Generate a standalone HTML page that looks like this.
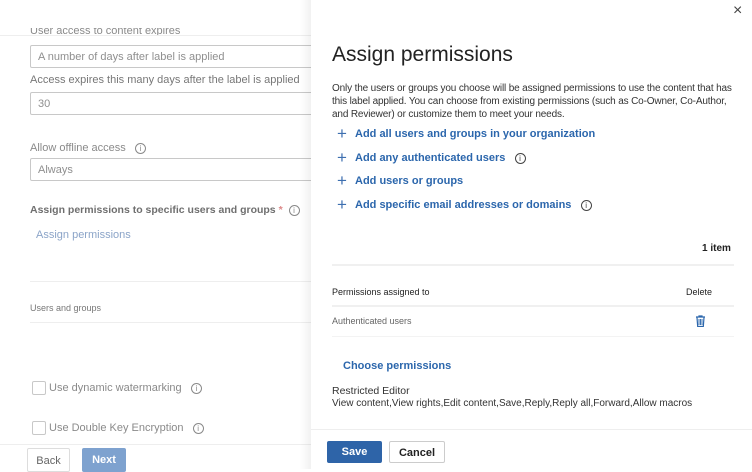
<!DOCTYPE html>
<html><head><meta charset="utf-8"><style>
*{margin:0;padding:0;box-sizing:border-box}
body{width:752px;height:469px;overflow:hidden;background:#fff;font-family:"Liberation Sans",sans-serif;position:relative}
.a{position:absolute;white-space:nowrap}
.l{color:#8a8a8a;font-size:11px}
.in{position:absolute;left:30px;width:290px;height:23px;border:1px solid #c8c8c8;border-radius:2px;color:#8f8f8f;font-size:11px;padding:5px 0 0 7px}
.i{display:inline-block;width:11px;height:11px;border:1px solid currentColor;border-radius:50%;font-size:8px;line-height:9px;text-align:center;vertical-align:middle}
.cb{position:absolute;left:32px;width:14px;height:14px;border:1px solid #c8c8c8;border-radius:2px}
.lk{position:absolute;left:337px;color:#2b66ac;font-size:11px;font-weight:bold;white-space:nowrap}
.lk span.p{display:inline-block;width:18px;font-weight:normal;font-size:17px;vertical-align:-2px;color:#3d6fb0}
</style></head><body>
<div style="position:absolute;left:0;top:0;width:312px;height:469px;background:#fff"></div>
<div class="a l" style="left:30px;top:28px;height:7px;overflow:hidden;line-height:7px">User access to content expires</div>
<div style="position:absolute;left:0;top:35px;width:312px;border-top:1px solid #eee"></div>
<div class="in" style="top:45px">A number of days after label is applied</div>
<div class="a" style="left:30px;top:74px;font-size:11px;color:#777">Access expires this many days after the label is applied</div>
<div class="in" style="top:92px">30</div>
<div class="a l" style="left:30px;top:142px">Allow offline access &nbsp;&nbsp;<span class="i">i</span></div>
<div class="in" style="top:158px">Always</div>
<div class="a" style="left:30px;top:204px;font-size:10.5px;color:#6f6f6f;font-weight:bold">Assign permissions to specific users and groups <span style="color:#d88">*</span> &nbsp;<span class="i" style="font-weight:normal;color:#888">i</span></div>
<div class="a" style="left:36px;top:229px;font-size:11px;color:#8ba4c8">Assign permissions</div>
<div style="position:absolute;left:30px;top:281px;width:282px;border-top:1px solid #eee"></div>
<div class="a" style="left:30px;top:303px;font-size:9px;color:#777">Users and groups</div>
<div style="position:absolute;left:30px;top:322px;width:282px;border-top:1px solid #eee"></div>
<div class="cb" style="top:381px"></div>
<div class="a l" style="left:49px;top:382px">Use dynamic watermarking &nbsp;&nbsp;<span class="i">i</span></div>
<div class="cb" style="top:421px"></div>
<div class="a l" style="left:49px;top:422px">Use Double Key Encryption &nbsp;&nbsp;<span class="i">i</span></div>
<div style="position:absolute;left:0;top:444px;width:312px;border-top:1px solid #eee"></div>
<div style="position:absolute;left:27px;top:448px;width:43px;height:24px;border:1px solid #ddd;border-radius:2px;font-size:11px;color:#666;text-align:center;padding-top:6px">Back</div>
<div style="position:absolute;left:82px;top:448px;width:44px;height:24px;background:#7ea2cf;border-radius:2px;font-size:11px;color:#fff;font-weight:bold;text-align:center;padding-top:6px">Next</div>
<div style="position:absolute;left:300px;top:0;width:12px;height:469px;background:linear-gradient(90deg,rgba(0,0,0,0),rgba(0,0,0,.06))"></div>

<div style="position:absolute;left:311px;top:0;width:441px;height:469px;background:#fff"></div>
<div class="a" style="left:733px;top:2px;font-size:16px;color:#444">×</div>
<div class="a" style="left:332px;top:43px;font-size:21px;color:#222">Assign permissions</div>
<div class="a" style="left:332px;top:82px;font-size:10px;color:#333;line-height:13px;letter-spacing:-0.15px">Only the users or groups you choose will be assigned permissions to use the content that has<br>this label applied. You can choose from existing permissions (such as Co-Owner, Co-Author,<br>and Reviewer) or customize them to meet your needs.</div>
<div class="lk" style="top:124px"><span class="p">+</span>Add all users and groups in your organization</div>
<div class="lk" style="top:148px"><span class="p">+</span>Add any authenticated users &nbsp;&nbsp;<span class="i" style="color:#444;font-weight:normal">i</span></div>
<div class="lk" style="top:171px"><span class="p">+</span>Add users or groups</div>
<div class="lk" style="top:195px"><span class="p">+</span>Add specific email addresses or domains &nbsp;&nbsp;<span class="i" style="color:#444;font-weight:normal">i</span></div>
<div class="a" style="left:702px;top:243px;font-size:10px;color:#222;font-weight:bold">1 item</div>
<div style="position:absolute;left:332px;top:264px;width:402px;border-top:2px solid #f0f0f0"></div>
<div class="a" style="left:332px;top:287px;font-size:9px;color:#222">Permissions assigned to</div>
<div class="a" style="left:686px;top:287px;font-size:9px;color:#222">Delete</div>
<div style="position:absolute;left:332px;top:305px;width:402px;border-top:2px solid #f0f0f0"></div>
<div class="a" style="left:332px;top:316px;font-size:9px;color:#666">Authenticated users</div>
<svg style="position:absolute;left:695px;top:315px" width="11" height="12" viewBox="0 0 11 12"><path d="M1 2h9M4 2V1h3v1M2 2.5l.7 9h5.6l.7-9" fill="none" stroke="#2b66ac" stroke-width="1.2"/><path d="M4 4v6M5.5 4v6M7 4v6" stroke="#2b66ac" stroke-width=".9"/></svg>
<div style="position:absolute;left:332px;top:336px;width:402px;border-top:1px solid #f3f3f3"></div>
<div class="a" style="left:343px;top:360px;font-size:11px;color:#2b66ac;font-weight:bold">Choose permissions</div>
<div class="a" style="left:332px;top:385px;font-size:10.5px;color:#333">Restricted Editor</div>
<div class="a" style="left:332px;top:398px;font-size:10px;color:#333">View content,View rights,Edit content,Save,Reply,Reply all,Forward,Allow macros</div>
<div style="position:absolute;left:311px;top:429px;width:441px;border-top:1px solid #eee"></div>
<div style="position:absolute;left:327px;top:441px;width:55px;height:22px;background:#2e64a8;border-radius:2px;color:#fff;font-size:11px;font-weight:bold;text-align:center;padding-top:5px">Save</div>
<div style="position:absolute;left:389px;top:441px;width:56px;height:22px;border:1px solid #ccc;border-radius:2px;color:#222;font-size:11px;font-weight:bold;text-align:center;padding-top:5px">Cancel</div>
</body></html>
